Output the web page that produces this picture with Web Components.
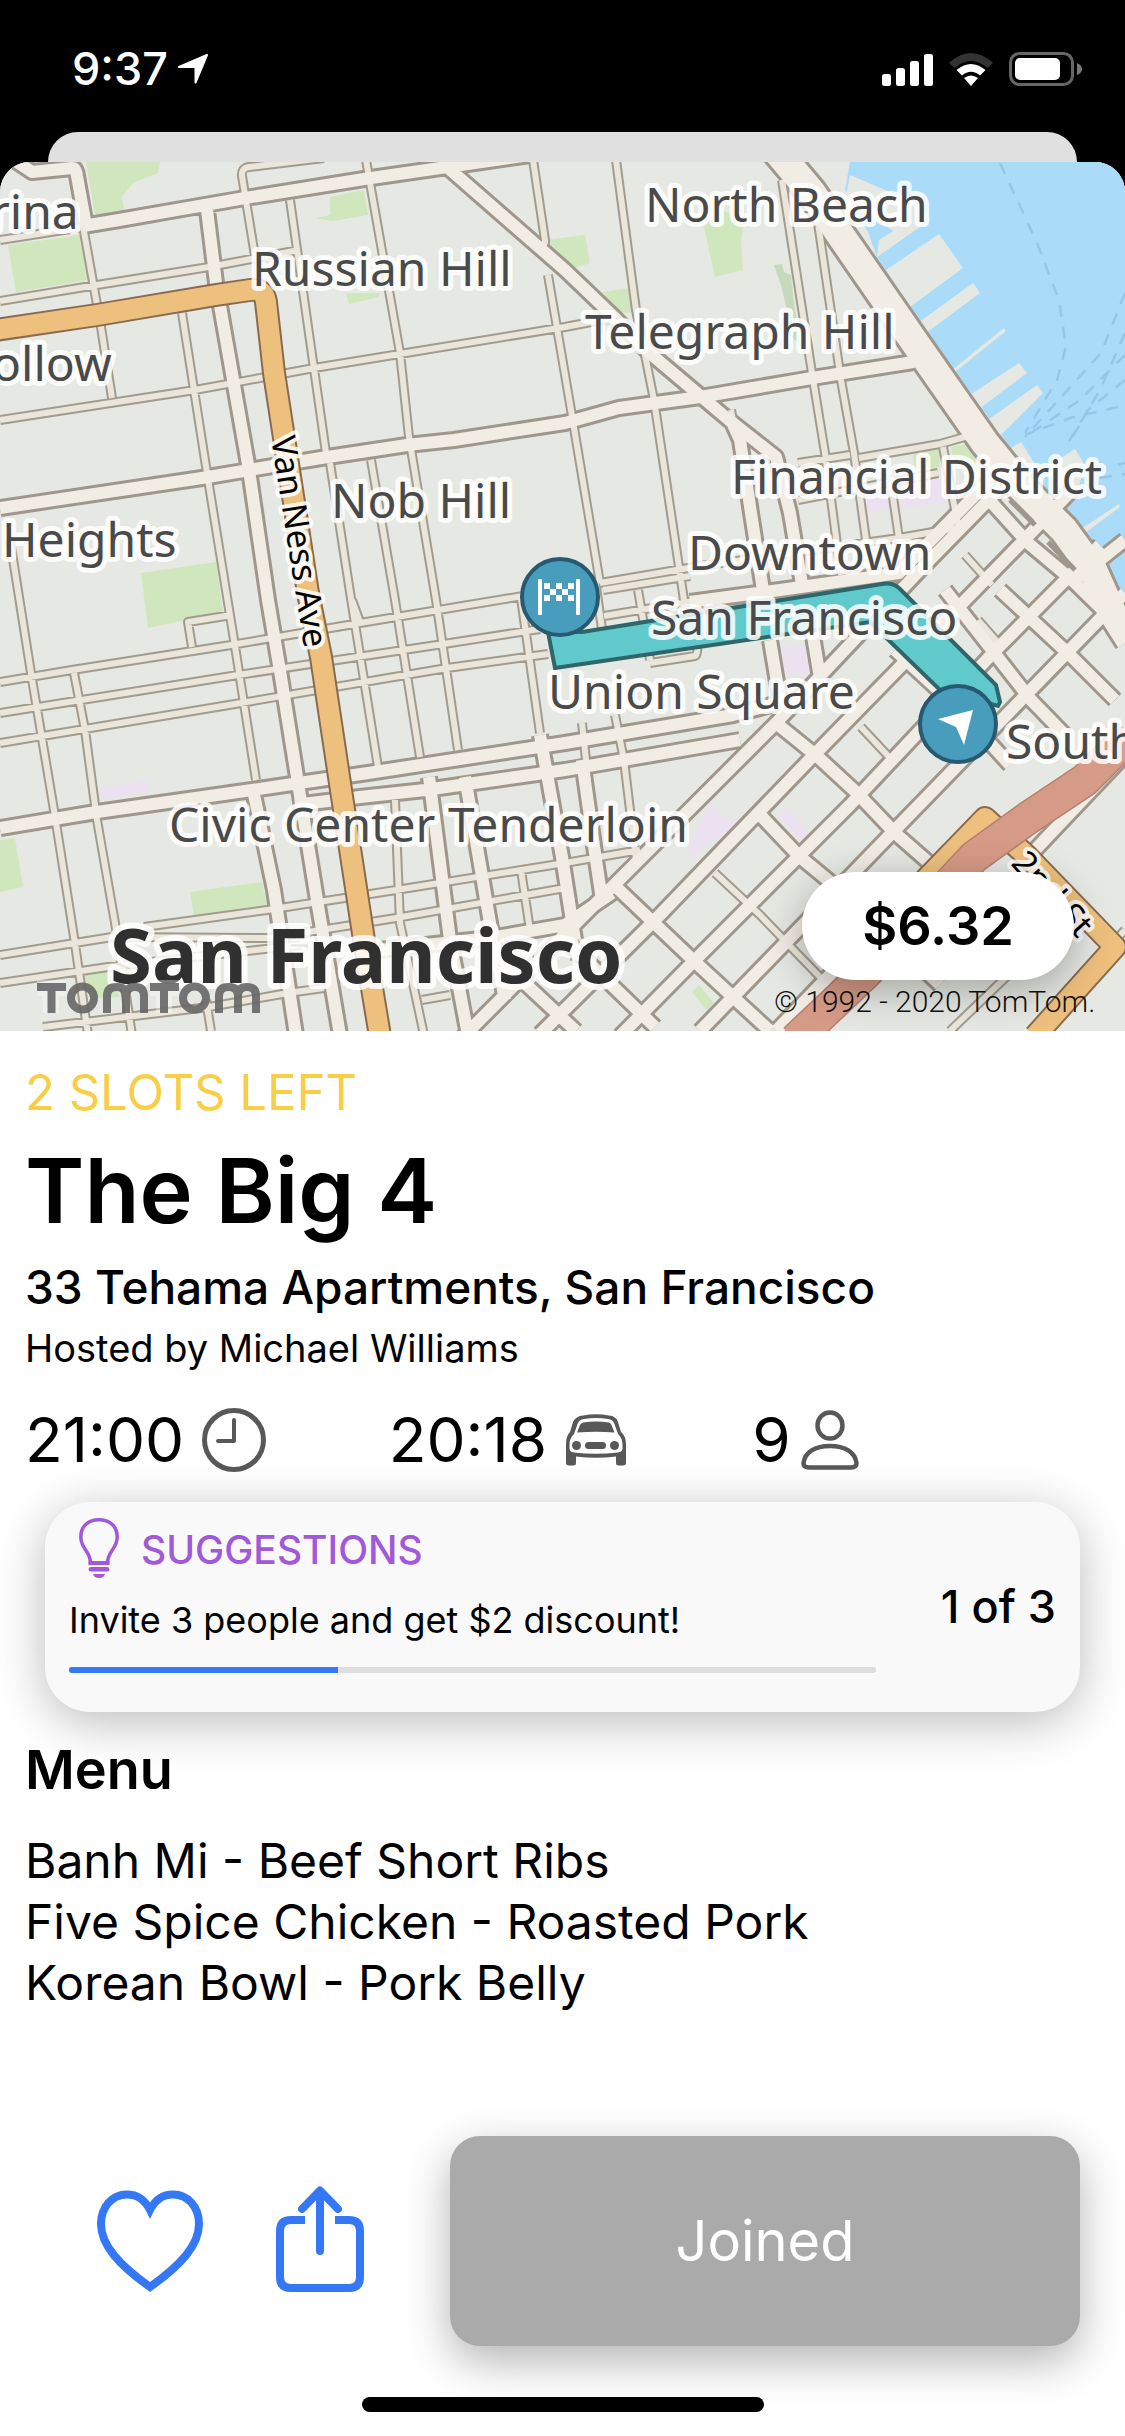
<!DOCTYPE html>
<html lang="en">
<head>
<meta charset="utf-8">
<meta name="viewport" content="width=device-width, initial-scale=1">
<title>The Big 4</title>
<style>
  body {
    margin: 0;
    background: #000;
    color: #000;
    font-family: Inter, "Liberation Sans", sans-serif;
  }
</style>
</head>
<body>
<order-screen>
  <status-bar slot="status" time="9:37"></status-bar>
  <route-map slot="map" price="$6.32"></route-map>
  <order-summary slot="content">
    <span slot="slots">2 SLOTS LEFT</span>
    <span slot="title">The Big 4</span>
    <span slot="address">33 Tehama Apartments, San Francisco</span>
    <span slot="host">Hosted by Michael Williams</span>
  </order-summary>
  <order-stats slot="content">
    <stat-item icon="clock">21:00</stat-item>
    <stat-item icon="car">20:18</stat-item>
    <stat-item icon="person">9</stat-item>
  </order-stats>
  <suggestion-card slot="content" value="1" max="3">Invite 3 people and get $2 discount!</suggestion-card>
  <menu-list slot="content" heading="Menu">
    <menu-line>Banh Mi - Beef Short Ribs</menu-line>
    <menu-line>Five Spice Chicken - Roasted Pork</menu-line>
    <menu-line>Korean Bowl - Pork Belly</menu-line>
  </menu-list>
  <action-bar slot="actions">Joined</action-bar>
</order-screen>

<script>
const icons = {
  clock: `<svg width="64" height="64" viewBox="0 0 64 64" fill="none" stroke="#585858" stroke-width="5" stroke-linecap="round" stroke-linejoin="round">
    <circle cx="32" cy="32" r="29.5"/><path d="M32 12v21H16" stroke-width="4"/></svg>`,
  car: `<svg width="62" height="52" viewBox="0 0 62 52" fill="#585858">
    <path fill-rule="evenodd" d="M18 1.5Q31-1 44 1.500Q51 2 53 8L56 18Q61 22 61 30V49Q61 51.500 58 51.500H54Q51 51.500 51 49V42.500Q31 45 11 42.500V49Q11 51.500 8 51.500H4Q1 51.500 1 49V30Q1 22 5 18L8 8Q11 2 18 1.500ZM19 5Q31 3 43 5Q48 5.500 49.500 10L53 20Q57.500 24 57.500 31V35Q57 38 53 38.500Q31 41 9 38.500Q5 38 4.500 35V31Q4.500 24 9 20L12.500 10Q14 5.500 19 5Z"/>
    <path d="M18 8.500Q31 6.500 44 8.500Q46 9 46.500 11L49.500 18.500Q31 17 12 18.500L15 11Q16 9 18 8.500Z"/>
    <circle cx="11.500" cy="31.500" r="4.500"/><circle cx="49.500" cy="31.500" r="4.500"/><rect x="20" y="28" width="21" height="7" rx="3.500"/></svg>`,
  person: `<svg width="58" height="60" viewBox="0 0 58 60" fill="none" stroke="#585858" stroke-width="4.5">
    <ellipse cx="29" cy="15.500" rx="12.500" ry="13"/><path d="M8 57.500Q2.500 57.500 2.500 53C4 42 14 36 29 36S54 42 55.500 53Q55.500 57.500 50 57.500Z"/></svg>`,
  bulb: `<svg width="40" height="60" viewBox="0 0 40 60" fill="none" stroke="#a259d9" stroke-width="3.500">
    <path d="M11.500 45C11.500 33 1.800 31 1.800 19C1.800 8 9.500 1.800 20 1.800S38.200 8 38.200 19C38.200 31 28.500 33 28.500 45Z"/>
    <path fill="#a259d9" stroke="none" d="M9.500 43h21v4h-21zM12 49h16q2.500 0 2.500 2.300T28 53.500H12q-2.500 0-2.500-2.200T12 49zM14 56h12q-1 4-6 4t-6-4z"/></svg>`,
  heart: `<svg width="106" height="102" viewBox="0 0 106 102" fill="none" stroke="#3478f6" stroke-width="8">
    <path d="M53 97C22 75 4 55 4 34C4 17 15 4.500 30 4.500C40 4.500 48 10 53 20C58 10 66 4.500 76 4.500C91 4.500 102 17 102 34C102 55 84 75 53 97Z"/></svg>`,
  share: `<svg width="88" height="106" viewBox="0 0 88 106" fill="none" stroke="#3478f6" stroke-width="8">
    <path d="M29 34H15Q4 34 4 45V91Q4 102 15 102H73Q84 102 84 91V45Q84 34 73 34H59"/>
    <path d="M44 65V6M26 23L44 4.500L62 23" stroke-linecap="round" stroke-linejoin="round"/></svg>`
};

class OrderScreen extends HTMLElement {
  constructor() {
    super();
    this.attachShadow({ mode: 'open' });
    this.shadowRoot.innerHTML = `
      <style>
        :host { display: flex; flex-direction: column; min-height: 100vh; }
        .behind { height: 30px; margin: 0 48px; background: #e0e0e0; border-radius: 30px 30px 0 0; }
        main { flex: 1; display: flex; flex-direction: column; background: #fff; border-radius: 30px 30px 0 0; overflow: hidden; }
        .spacer { flex: 1; }
        .home { align-self: center; width: 402px; height: 15px; margin: 51px 0 24px; border-radius: 8px; background: #000; position: relative; }
      </style>
      <slot name="status"></slot>
      <div class="behind"></div>
      <main>
        <slot name="map"></slot>
        <slot name="content"></slot>
        <div class="spacer"></div>
        <slot name="actions"></slot>
        <div class="home"></div>
      </main>
    `;
  }
}

class StatusBar extends HTMLElement {
  constructor() {
    super();
    this.attachShadow({ mode: 'open' });
  }

  connectedCallback() {
    this.shadowRoot.innerHTML = `
      <style>
        :host { display: flex; align-items: center; height: 126px; padding: 6px 43px 0 72px; color: #fff; }
        .time { font-size: 45px; line-height: 54px; font-weight: 500; }
        .arrow { margin-left: 10px; }
        .system { margin-left: auto; display: flex; align-items: center; gap: 16px; }
        svg { display: block; }
      </style>
      <span class="time">${this.getAttribute('time')}</span>
      <svg class="arrow" width="30" height="30" viewBox="0 0 30 30" fill="#fff" stroke="#fff" stroke-linejoin="round"><path d="M29 1L17.500 28.500V13H1Z" stroke-width="2"/></svg>
      <div class="system">
        <svg width="51" height="33" viewBox="0 0 51 33" fill="#fff"><rect y="21" width="9" height="12" rx="2.500"/><rect x="14" y="15" width="9" height="18" rx="2.500"/><rect x="28" y="8" width="9" height="25" rx="2.500"/><rect x="42" y="1" width="9" height="32" rx="2.500"/></svg>
        <svg width="44" height="33" viewBox="0 0 44 33" fill="#fff"><path fill="#333" d="M0 10Q22-10 44 10L38.500 15Q22 1 5.500 15Z"/><path d="M7.500 17Q22 5 36.500 17L31 22.500Q22 15 13 22.500ZM15 25Q22 20 29 25L22 33Z"/></svg>
        <svg width="73" height="34" viewBox="0 0 73 34"><rect x="1.500" y="1.500" width="62" height="31" rx="9" fill="none" stroke="#666" stroke-width="3"/><rect x="6" y="6" width="45" height="22" rx="5" fill="#fff"/><path d="M68 11q5 2 5 6t-5 6z" fill="#777"/></svg>
      </div>
    `;
  }
}

// Map geometry. Coordinates share the viewBox of the map svg.
const water = '850,162 1125,162 1125,600 1113,590 1096,562 1060,515 1010,447 920,322 877,257 868,232 845,190';
const piers = [
  '879,240 924,212 930,220 877,257', '886,270 939,234 963,268 910,307', '915,325 973,283 980,293 922,336',
  '952,370 1004,328 1006,331 955,372', '965,398 1019,363 1027,373 975,412', '985,422 1037,385 1043,393 996,440',
  '1000,455 1021,442 1045,480 1030,490', '1050,465 1075,449 1085,465 1075,500 1060,506', '1055,500 1073,517 1079,533 1060,540',
  '1075,533 1119,504 1120,507 1078,538', '920,205 930,220 900,235 845,200 850,175'
];
const parks = [
  '86,162 160,162 158,173 133,183 122,197 124,210 95,215', '8,245 81,235 88,280 16,292',
  '330,197 364,190 368,215 333,221 315,218 330,215', '346,293 380,293 378,297 349,304', '141,573 216,562 223,612 148,628',
  '545,240 585,235 590,263 574,268 548,246', '603,292 630,288 634,312 621,313', '704,227 722,210 744,220 741,240 743,270 715,277',
  '913,453 938,448 940,468 915,470', '951,447 973,443 985,468 955,470', '0,840 15,838 23,887 0,892',
  '190,892 262,882 267,905 194,916', '84,973 108,971 120,997 90,998', '692,992 699,985 714,1003 707,1010'
];
const grove = '774,265 782,264 784,272 791,275 794,303 800,345 780,325 787,310 781,285';
const malls = [
  '866,498 944,477 946,502 868,512', '100,788 148,780 150,792 101,800', '782,647 805,645 807,673 785,675',
  '711,803 725,817 740,820 693,857 686,850', '778,817 787,808 809,832 801,840'
];
const minor = [
  // north-south streets
  'M83 226L101 327L112 398', 'M182 313L207 473L234 640L256 780', 'M324 158L249 167Q241 168 242 176L247 207L256 262',
  'M290 200L326 453', 'M330 463L352 605L378 767', 'M371 460L395 600L420 757', 'M366 160L400 353L409 437L436 600L458 750',
  'M533 160L545 240Q546 248 534 247', 'M548 275L571 410L600 583', 'M616 160L636 310L654 400L684 600', 'M782 180L812 373L825 453L841 575',
  'M818 223L841 380L854 453L866 540', 'M889 470L900 545', 'M943 447L958 525', 'M10 540L31 673L54 810L74 937L88 1035',
  'M74 673L85 730L97 820L115 923L132 1035', 'M232 615L188 622L192 647', 'M521 598L540 733', 'M395 800L400 923L424 1035',
  'M582 723L586 760L594 860', 'M615 715L624 760L636 860', 'M562 868L575 960', 'M206 1000L211 1031', 'M595 580L605 650', 'M638 590L650 660',
  'M731 410L735 430', 'M521 870L530 930',
  // east-west streets
  'M0 240L83 227', 'M0 301L97 285L209 267L299 250', 'M0 420L195 390L314 368L565 327L612 318', 'M0 682L72 670L231 645L360 623L523 596',
  'M360 622L352 600', 'M0 713L238 675L450 643L540 629', 'M0 743L241 703L447 668L548 654', 'M600 583L700 566L899 538L956 528',
  'M144 927L267 910L396 890L565 863L640 850', 'M0 955L112 937L270 938L396 918L565 888', 'M0 983L108 967L300 945',
  'M43 1027L209 1007L288 993L324 988', 'M422 1000L450 995', 'M859 458L940 444L975 434', 'M798 463L850 455', 'M798 500L938 473',
  'M603 590L690 576', 'M604 616L700 600', 'M650 663L695 656Q698 655 697 645',
  // south of market
  'M861 727L890 758', 'M715 873L760 915L820 977L850 1010', 'M965 555L992 585', 'M978 620L1000 645', 'M1060 1000L1125 930', 'M950 1031L1060 925'
];
const major = [
  'M14 160L32 172L72 168Q76 168 77 176L86 226', 'M83 226L119 220L245 198L364 179L447 167L530 155', 'M447 167L565 270L614 317L646 350L697 393L729 420L776 457L790 513L803 590',
  'M207 210L216 283L249 470L268 600L281 677L297 777L317 900L340 1035', 'M0 508L202 478L249 470L321 458L407 445L454 440L565 423L619 408L700 397L812 378L913 362L924 350',
  'M731 420L740 440L751 513L763 590', 'M0 828L90 813L252 790L299 783L368 773L565 743L733 715L790 700', 'M252 785L274 890L296 1035',
  'M295 805L360 797L425 790L565 770L740 740', 'M429 777L450 940L468 1035', 'M465 777L490 923L505 1000', 'M540 735L562 857L575 940',
  'M582 760L596 860L602 900', 'M380 950L490 938L565 925L612 893', 'M690 602L780 590L899 573L990 480', 'M770 640L780 700', 'M812 630L822 690',
  // Market, Mission, Howard, Folsom and Harrison
  'M460 1040L614 885L776 723L920 570L1010 478', 'M540 1034L655 920L812 757L1028 536L1072 490', 'M620 1036L695 960L850 805L992 654L1100 545', 'M700 1031L733 997L888 837L1125 593', 'M776 1031L950 850', 'M1035 850L1125 755',
  // cross streets
  'M776 723L818 757L857 793L895 833L960 890', 'M762 817L800 857L840 890L940 985', 'M614 885L654 923L693 960L733 997L770 1031', 'M500 960L576 1031', 'M560 935L655 1027',
  'M945 590L992 650L1031 700L1065 735', 'M1000 590L1072 657L1115 700', 'M992 503L1028 543L1072 580L1125 632', 'M1075 580L1125 540', 'M895 650L960 710L1010 765'
];
const shore = 'M776 150L812 193L837 230L920 350L985 443L1021 487L1064 530L1093 570L1111 610L1130 640';
const highway = ['M-5 330L97 315L216 295L250 290Q264 288 266 302L274 373L308 593L321 657L341 790L364 940L380 1036', 'M925 880L985 818L1028 857L1115 947L1035 1036'];
const freeway = 'M1130 735L1085 780L1028 818L974 857L866 973L795 1040';
const ferries = [
  'M1000 163L1037 243L1059 300L1066 347L1057 380L1025 433', 'M1125 293L1101 353L1025 437', 'M1125 333L1100 390L1068 443', 'M1125 355L1080 400L1025 437',
  'M1118 407L1070 418L1025 435', 'M1125 380L1088 410L1068 445', 'M1118 465L1125 463', 'M1100 478L1125 474'
];
// [text, x, baseline]
const places = [
  ['rina', -10, 229], ['North Beach', 645, 222], ['Russian Hill', 252, 286], ['Telegraph Hill', 585, 349], ['ollow', -8, 381],
  ['Nob Hill', 331, 518], ['Heights', 2, 557], ['Financial District', 731, 494], ['Downtown', 688, 570], ['San Francisco', 651, 635],
  ['Union Square', 548, 709], ['South', 1006, 759], ['Civic Center', 169, 842], ['Tenderloin', 448, 842]
];

class RouteMap extends HTMLElement {
  constructor() {
    super();
    this.attachShadow({ mode: 'open' });
  }

  polygons(list, fill) {
    return list.map(points => `<polygon points="${points}" fill="${fill}"/>`).join('');
  }

  // a road is a wide casing with a narrower fill on top
  roads(list, width, color) {
    return `<path d="${list.join('')}" stroke="${color}" stroke-width="${width}"/>`;
  }

  connectedCallback() {
    let checks = '';
    for (let row = 0; row < 3; row++) {
      for (let col = row % 2; col < 5; col += 2) {
        checks += `<rect x="${544 + col * 6}" y="${583 + row * 6}" width="6" height="6"/>`;
      }
    }

    this.shadowRoot.innerHTML = `
      <style>
        :host { display: block; position: relative; }
        svg { display: block; width: 100%; aspect-ratio: 1125 / 869; background: #e6e8e3; }
        text { paint-order: stroke; stroke: rgba(255, 255, 255, 0.85); stroke-linejoin: round; font-family: "Noto Sans", sans-serif; }
        .place { font-size: 48px; fill: #4a4a4a; stroke-width: 10px; }
        .city { font-size: 76px; font-weight: 700; fill: #303030; stroke-width: 12px; }
        .street { font-size: 34px; fill: #000; stroke-width: 8px; }
        .copyright { font-size: 30px; font-family: Roboto, sans-serif; font-weight: 300; fill: #111; stroke: none; }
        .price {
          position: absolute; right: 51px; bottom: 51px;
          padding: 22px 60px; border-radius: 54px; background: #fff;
          font-size: 54px; line-height: 64px; font-weight: 600;
          box-shadow: 0 10px 40px rgba(0, 0, 0, 0.3);
        }
      </style>
      <svg viewBox="0 162 1125 869" preserveAspectRatio="xMidYMid slice" role="img" aria-label="Route map">
        ${this.polygons([water], '#aadcf9')}
        ${this.polygons(piers, '#e6e8e3')}
        ${this.polygons(parks, '#d0e6bc')}
        ${this.polygons([grove], '#c5d9bc')}
        ${this.polygons(malls, '#ece1f0')}
        <path d="${ferries.join('')}" fill="none" stroke="#95c8e6" stroke-width="2.500" stroke-dasharray="12 10"/>
        <g fill="none" stroke-linejoin="round">
          ${this.roads(minor, 10, '#a39b8e')}
          ${this.roads(major, 18, '#9f978b')}
          ${this.roads([shore], 34, '#9f978b')}
          ${this.roads(minor, 6, '#eae6db')}
          ${this.roads(major, 12, '#f1ece4')}
          ${this.roads([shore], 28, '#f1ece4')}
          <path d="M1010 500L1035 525M1048 542L1075 570" stroke="#9f978b" stroke-width="5"/>
          ${this.roads(highway, 24, '#886a50')}
          ${this.roads(highway, 20, '#eec07e')}
          ${this.roads([freeway], 34, '#b58071')}
          ${this.roads([freeway], 31, '#d69b87')}
        </g>
        <path d="M548 632L555 668L870 622L940 690L998 706L1000 702L996 685L899 588Q892 582 882 584L582 632Z" fill="#5fc9cc" stroke="#2e666a" stroke-width="4"/>
        <g stroke="#275a70" stroke-width="4" fill="#479dbb"><circle cx="560" cy="597" r="38"/><circle cx="958" cy="724" r="38"/></g>
        <g fill="#fff"><rect x="538" y="579" width="4" height="36" rx="1"/><rect x="576" y="579" width="4" height="36" rx="1"/>${checks}
          <path d="M973 710L964 745L956 727L938 719Z"/></g>
        ${places.map(([name, x, y]) => `<text class="place" x="${x}" y="${y}">${name}</text>`).join('')}
        <text class="street" transform="translate(271 438) rotate(81)">Van Ness Ave</text>
        <text class="street" transform="translate(1010 864) rotate(48)">2nd St</text>
        <text class="city" x="110" y="983">San Francisco</text>
        <g fill="none">
          <path d="M37 988h29M51 988v25M150 988h29M164 988v25" stroke="#fff" stroke-opacity=".35" stroke-width="16"/>
          <g stroke="#666" stroke-opacity=".9" stroke-width="8">
            <path d="M37 987h29M51.500 987v26M150 987h29M164 987v26"/>
            <circle cx="82.500" cy="998" r="11.500"/><circle cx="194.500" cy="998" r="11.500"/>
            <path d="M107 1013v-17q0-9 9.500-9t9.500 9v17M126 996q0-9 9-9t9 9v17M219 1013v-17q0-9 9.500-9t9.500 9v17M238 996q0-9 9-9t9 9v17"/>
          </g>
        </g>
        <text class="copyright" x="774" y="1012">© 1992 - 2020 TomTom.</text>
      </svg>
      <span class="price">${this.getAttribute('price')}</span>
    `;
  }
}

class OrderSummary extends HTMLElement {
  constructor() {
    super();
    this.attachShadow({ mode: 'open' });
    this.shadowRoot.innerHTML = `
      <style>
        :host { display: block; padding: 32px 25px 0; }
        p, h1, h2 { margin: 0; }
        .slots { font-size: 49px; line-height: 60px; color: #f7ce46; }
        h1 { margin-top: 14px; font-size: 90px; line-height: 108px; font-weight: 600; }
        h2 { margin-top: 14px; font-size: 46px; line-height: 56px; font-weight: 500; }
        .host { margin-top: 10px; font-size: 38px; line-height: 46px; }
      </style>
      <p class="slots"><slot name="slots"></slot></p>
      <h1><slot name="title"></slot></h1>
      <h2><slot name="address"></slot></h2>
      <p class="host"><slot name="host"></slot></p>
    `;
  }
}

class OrderStats extends HTMLElement {
  constructor() {
    super();
    this.attachShadow({ mode: 'open' });
    this.shadowRoot.innerHTML = `
      <style>
        :host { display: grid; grid-template-columns: repeat(3, 1fr); gap: 16px; padding: 33px 25px 26px; }
      </style>
      <slot></slot>
    `;
  }
}

class StatItem extends HTMLElement {
  constructor() {
    super();
    this.attachShadow({ mode: 'open' });
  }

  connectedCallback() {
    const icon = this.getAttribute('icon');
    this.shadowRoot.innerHTML = `
      <style>
        :host { display: flex; align-items: center; gap: ${icon === 'person' ? 10 : 18}px; font-size: 62px; line-height: 72px; }
        svg { display: block; }
      </style>
      <span><slot></slot></span>
      ${icons[icon]}
    `;
  }
}

class SuggestionCard extends HTMLElement {
  constructor() {
    super();
    this.attachShadow({ mode: 'open' });
  }

  connectedCallback() {
    const value = this.getAttribute('value');
    const max = this.getAttribute('max');
    this.shadowRoot.innerHTML = `
      <style>
        :host {
          display: flex; align-items: center; gap: 65px;
          margin: 0 45px; padding: 0 24px; border-radius: 45px; background: #f9f9f9;
          box-shadow: 0 10px 50px rgba(0, 0, 0, 0.27);
        }
        .body { flex: 1; padding: 16px 0 39px; }
        header { display: flex; align-items: flex-end; gap: 22px; padding-left: 10px; font-size: 39px; line-height: 56px; font-weight: 500; color: #a259d9; }
        svg { display: block; }
        label { display: block; margin: 20px 0 25px; font-size: 36px; line-height: 44px; }
        progress { display: block; width: 100%; height: 6px; border: 0; appearance: none; }
        progress::-webkit-progress-bar { background: #dedede; border-radius: 3px; }
        progress::-webkit-progress-value { background: #3478f6; border-radius: 3px 0 0 3px; }
        .count { font-size: 45px; line-height: 54px; font-weight: 500; }
      </style>
      <div class="body">
        <header>${icons.bulb}<span>SUGGESTIONS</span></header>
        <label for="progress"><slot></slot></label>
        <progress id="progress" value="${value}" max="${max}"></progress>
      </div>
      <span class="count">${value} of ${max}</span>
    `;
  }
}

class MenuList extends HTMLElement {
  constructor() {
    super();
    this.attachShadow({ mode: 'open' });
  }

  connectedCallback() {
    this.shadowRoot.innerHTML = `
      <style>
        :host { display: block; padding: 26px 25px; position: relative; }
        h3 { margin: 0 0 28px; font-size: 54px; line-height: 64px; font-weight: 600; }
        div { font-size: 48px; line-height: 61px; }
      </style>
      <h3>${this.getAttribute('heading')}</h3>
      <div role="list"><slot></slot></div>
    `;
  }
}

class MenuLine extends HTMLElement {
  constructor() {
    super();
    this.attachShadow({ mode: 'open' });
    this.shadowRoot.innerHTML = `
      <style>
        :host { display: block; }
      </style>
      <slot></slot>
    `;
  }

  connectedCallback() {
    this.setAttribute('role', 'listitem');
  }
}

class ActionBar extends HTMLElement {
  constructor() {
    super();
    this.attachShadow({ mode: 'open' });
    this.shadowRoot.innerHTML = `
      <style>
        :host { display: flex; align-items: center; padding: 0 45px 0 97px; }
        button { border: 0; padding: 0; background: none; font: inherit; }
        svg { display: block; }
        .share { margin: 0 86px 4px 73px; }
        .join {
          flex: 1; height: 210px; border-radius: 30px; background: #aaa; color: #fff;
          font-size: 56px; line-height: 72px;
          box-shadow: 0 15px 45px rgba(0, 0, 0, 0.3);
        }
      </style>
      <button type="button" aria-label="Like">${icons.heart}</button>
      <button type="button" class="share" aria-label="Share">${icons.share}</button>
      <button type="button" class="join"><slot></slot></button>
    `;
  }
}

customElements.define('order-screen', OrderScreen);
customElements.define('status-bar', StatusBar);
customElements.define('route-map', RouteMap);
customElements.define('order-summary', OrderSummary);
customElements.define('order-stats', OrderStats);
customElements.define('stat-item', StatItem);
customElements.define('suggestion-card', SuggestionCard);
customElements.define('menu-list', MenuList);
customElements.define('menu-line', MenuLine);
customElements.define('action-bar', ActionBar);
</script>
</body>
</html>
